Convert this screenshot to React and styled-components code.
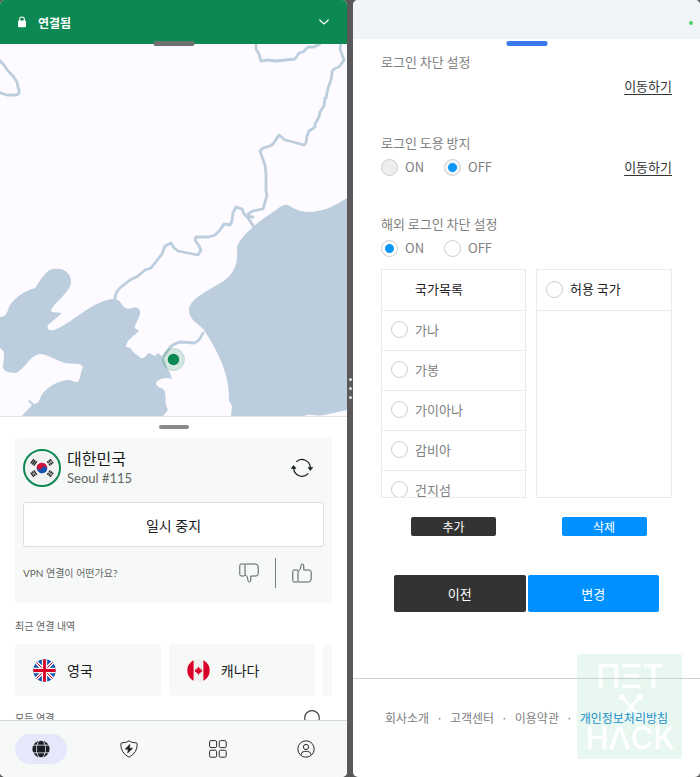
import React, { useState } from 'react';
import styled, { createGlobalStyle, css } from 'styled-components';

const countries = ['가나', '가봉', '가이아나', '감비아', '건지섬'];

const footerLinks = ['회사소개', '고객센터', '이용약관', '개인정보처리방침'];

const App = () => (
  <>
    <GlobalStyle />
    <Screen>
      <VpnPanel />
      <Divider>
        <DividerDot />
        <DividerDot />
        <DividerDot />
      </Divider>
      <SettingsPanel />
    </Screen>
  </>
);

const VpnPanel = () => {
  const [tab, setTab] = useState('map');

  const tabs = [
    { id: 'map', label: '지도', icon: <GlobeIcon /> },
    { id: 'protect', label: '보호', icon: <ShieldIcon /> },
    { id: 'apps', label: '앱', icon: <GridIcon /> },
    { id: 'profile', label: '프로필', icon: <UserIcon /> },
  ];

  return (
    <Vpn>
      <StatusBar>
        <LockIcon />
        <StatusText>연결됨</StatusText>
        <IconButton aria-label='펼치기'>
          <ChevronIcon />
        </IconButton>
        <WindowHandle $color='#6d706e' />
      </StatusBar>
      <MapArea>
        <WorldMap />
      </MapArea>
      <Sheet>
        <SheetGrip />
        <ServerCard>
          <ServerRow>
            <FlagRing>
              <KoreaFlag />
            </FlagRing>
            <ServerText>
              <Country>대한민국</Country>
              <City>Seoul #115</City>
            </ServerText>
            <IconButton aria-label='새로고침'>
              <RefreshIcon />
            </IconButton>
          </ServerRow>
          <PauseButton>일시 중지</PauseButton>
          <FeedbackRow>
            <Caption>VPN 연결이 어떤가요?</Caption>
            <FeedbackButtons>
              <IconButton aria-label='싫어요'>
                <ThumbIcon $down />
              </IconButton>
              <Separator />
              <IconButton aria-label='좋아요'>
                <ThumbIcon />
              </IconButton>
            </FeedbackButtons>
          </FeedbackRow>
        </ServerCard>
        <RecentTitle>최근 연결 내역</RecentTitle>
        <RecentList>
          <RecentItem>
            <BritainFlag />
            영국
          </RecentItem>
          <RecentItem>
            <CanadaFlag />
            캐나다
          </RecentItem>
          <RecentItem aria-label='더 보기' />
        </RecentList>
        <AllRow>
          <Caption>모든 연결</Caption>
          <IconButton aria-label='검색'>
            <SearchIcon />
          </IconButton>
        </AllRow>
      </Sheet>
      <TabBar>
        {tabs.map((item) => (
          <TabButton
            key={item.id}
            aria-label={item.label}
            $active={tab === item.id}
            onClick={() => setTab(item.id)}
          >
            {item.icon}
          </TabButton>
        ))}
      </TabBar>
    </Vpn>
  );
};

const SettingsPanel = () => (
  <Settings>
    <TopBar>
      <CameraDot />
    </TopBar>
    <WindowHandle $color='#3a78ee' />
    <SettingsBody>
      <Section>
        <SectionTitle>로그인 차단 설정</SectionTitle>
        <SectionRow>
          <MoveLink href='#block'>이동하기</MoveLink>
        </SectionRow>
      </Section>
      <Section>
        <SectionTitle>로그인 도용 방지</SectionTitle>
        <SectionRow>
          <OnOff name='theft' value='off' disabled />
          <MoveLink href='#theft'>이동하기</MoveLink>
        </SectionRow>
      </Section>
      <Section>
        <SectionTitle>해외 로그인 차단 설정</SectionTitle>
        <SectionRow>
          <OnOff name='abroad' value='on' />
        </SectionRow>
      </Section>
      <Pickers>
        <Picker $grow={145}>
          <PickerBox>
            <PickerHead $indent>국가목록</PickerHead>
            {countries.map((country) => (
              <PickerRow key={country}>
                <Radio type='radio' name='country' />
                {country}
              </PickerRow>
            ))}
          </PickerBox>
          <SmallButton>추가</SmallButton>
        </Picker>
        <Picker $grow={136}>
          <PickerBox>
            <PickerHead>
              <Radio type='radio' name='allowed' />
              허용 국가
            </PickerHead>
          </PickerBox>
          <SmallButton $primary>삭제</SmallButton>
        </Picker>
      </Pickers>
      <Actions>
        <ActionButton>이전</ActionButton>
        <ActionButton $primary>변경</ActionButton>
      </Actions>
    </SettingsBody>
    <Watermark />
    <Footer>
      {footerLinks.map((label, index) => (
        <React.Fragment key={label}>
          {index > 0 && <span>·</span>}
          <FooterLink href='#footer' $accent={index === 3}>
            {label}
          </FooterLink>
        </React.Fragment>
      ))}
    </Footer>
  </Settings>
);

const OnOff = ({ name, value, disabled }) => (
  <Options>
    {['on', 'off'].map((option) => (
      <Option key={option}>
        <Radio
          type='radio'
          name={name}
          defaultChecked={option === value}
          disabled={disabled}
        />
        {option.toUpperCase()}
      </Option>
    ))}
  </Options>
);

const WorldMap = () => (
  <MapSvg viewBox='0 44 347 372' preserveAspectRatio='xMidYMid slice'>
    {/* East sea */}
    <path
      fill='#bccddd'
      d='M347 198C333 207 321 212 309 212C299 212 293 208 290 206C285 203 281 206 276 210C270 214 262 219 254 226C244 235 236 243 237 251C238 264 234 273 225 280C212 289 189 298 189 310C189 320 198 323 204 330C219 353 230 376 229 401L232 406L231 416H304C312 413 316 417 324 415L347 410Z'
    />
    {/* Yellow sea */}
    <path
      fill='#bccddd'
      d='M0 317C6 317 7 313 9 307C14 297 25 291 35 288C40 281 46 269 54 269C66 267 72 276 71 283C69 294 53 303 51 311L52 312L62 313L48 325C46 329 50 331 54 330C70 325 95 298 115 299C122 300 121 308 129 309C135 306 141 307 140 314C138 321 134 326 135 328L139 331C133 337 126 340 126 347L131 348C132 353 137 354 141 358C146 359 145 355 149 353L155 356L158 353L164 358C166 368 171 373 172 379C165 376 156 380 156 384C158 389 164 387 165 392C166 402 165 405 168 410L163 416H22L32 405L28 401L30 400L34 404C38 404 40 400 41 396C46 388 55 382 67 380C72 380 75 383 78 382C81 377 80 373 83 367C80 362 75 365 65 363C55 360 47 354 40 354C30 355 25 369 16 373C5 373 2 369 3 365C5 355 4 350 0 348Z'
    />
    <g
      fill='none'
      stroke='#bccddd'
      strokeWidth='2.8'
      strokeLinejoin='round'
      strokeLinecap='round'
    >
      <path d='M-2 59L4 65L8 71L13 76L17 82L18 87L19 90Q20 94 16 95H7L-2 92' />
      <path d='M256 42V49L259 54L261 61L268 60L276 61L295 59L299 53L303 52L308 47L314 47L320 44' />
      <path d='M341 42L340 49L344 60L339 67Q331 69 332 74L331 80L328 88L326 98H325L324 106L320 112L319 117L315 124V127L309 131L307 136L306 143L304 145L293 142L285 140L279 135L273 144L270 146L263 148L260 151L265 165L266 173V191L267 195L263 209L253 211L248 214L250 217H253' />
      <path d='M254 227L248 218L244 214L242 209L236 207L233 213L232 221L230 225L224 224L220 230L215 235L209 237H196L195 240L199 246L201 250L198 255L188 253L178 251L174 248L171 243L165 246L162 254L151 268L145 270L138 276L130 280L121 287Q115 292 115 299' />
      <path d='M164 356L168 350Q173 343 181 342L194 343Q199 342 203 333' />
    </g>
    <circle cx='173.5' cy='359.5' r='11' fill='#0c8852' fillOpacity='.17' stroke='#0c8852' strokeOpacity='.2' />
    <circle cx='173.5' cy='359.5' r='5.7' fill='#0c8852' />
  </MapSvg>
);

const LockIcon = () => (
  <svg width='10' height='12' viewBox='0 0 10 12'>
    <path d='M2.6 5V3.4a2.4 2.4 0 0 1 4.8 0V5' fill='none' stroke='#fff' strokeWidth='1.1' />
    <rect x='1' y='4.6' width='8' height='6.6' rx='1.2' fill='#fff' />
  </svg>
);

const ChevronIcon = () => (
  <svg width='12' height='8' viewBox='0 0 12 8'>
    <path d='M1.4 1.8L6 6L10.6 1.8' fill='none' stroke='#fff' strokeWidth='1.2' />
  </svg>
);

const RefreshIcon = () => (
  <svg width='22' height='20' viewBox='0 0 22 20'>
    <g fill='none' stroke='#1a1c1c' strokeWidth='1.2'>
      <path d='M5.2 3.9A8.3 8.3 0 0 1 19.3 10' />
      <path d='M2.7 10A8.3 8.3 0 0 0 17.3 15.4' />
    </g>
    <path d='M17 9.4H21.8L19.4 12.4ZM.2 10.6H5L2.6 7.4Z' fill='#1a1c1c' stroke='#1a1c1c' strokeLinejoin='round' strokeWidth='.6' />
  </svg>
);

const ThumbIcon = ({ $down }) => (
  <svg width='20' height='20' viewBox='0 0 20 20'>
    <g
      fill='none'
      stroke='#555a59'
      strokeLinejoin='round'
      transform={$down ? 'matrix(1 0 0 -1 0 20)' : undefined}
    >
      <path d='M2.2 7H4.8Q6 7 6 8.2V17.8Q6 19 4.8 19H2.2Q.8 19 .8 17.6V8.4Q.8 7 2.2 7Z' />
      <path d='M6 8.4Q8.8 7 8.9 3.6V2.4Q9 1 10.3 1Q11.8 1 11.8 3V7H17Q19.2 7 19.2 9.2V16Q19.2 19 16.4 19H6' />
    </g>
  </svg>
);

const SearchIcon = () => (
  <svg width='20' height='20' viewBox='0 0 20 20'>
    <circle cx='10' cy='7.9' r='7.3' fill='none' stroke='#3a3d3d' strokeWidth='1.1' />
    <path d='M15 14L19 18.5' stroke='#3a3d3d' strokeWidth='1.1' />
  </svg>
);

const GlobeIcon = () => (
  <svg width='18' height='18' viewBox='0 0 18 18'>
    <circle cx='9' cy='9' r='8.6' fill='#1b1d20' />
    <g fill='none' stroke='#e4e8fa' strokeWidth='.9'>
      <ellipse cx='9' cy='9' rx='4.4' ry='9' />
      <path d='M0 5.2H18M0 12.8H18' />
    </g>
    <rect x='5.2' y='5.8' width='7.6' height='6.4' fill='#1b1d20' />
  </svg>
);

const ShieldIcon = () => (
  <svg width='18' height='18' viewBox='0 0 18 18'>
    <path
      d='M9 .8Q10.4 2.6 16.6 3Q17.2 3 17.2 3.8Q17.4 13 9 17.2Q.6 13 .8 3.8Q.8 3 1.4 3Q7.6 2.6 9 .8Z'
      fill='none'
      stroke='#2b2d2e'
      strokeLinejoin='round'
    />
    <path d='M9.8 4.2L5.2 9.2H8.2L7.6 13L12.8 8.2H9.6Z' fill='#1b1d20' stroke='#1b1d20' strokeWidth='.5' />
  </svg>
);

const GridIcon = () => (
  <svg width='18' height='18' viewBox='0 0 18 18' fill='none' stroke='#2b2d2e'>
    <rect x='.6' y='.6' width='7' height='7' rx='1.4' />
    <rect x='10.2' y='.6' width='7' height='7' rx='1.4' />
    <rect x='.6' y='10.2' width='7' height='7' rx='1.4' />
    <rect x='10.2' y='10.2' width='7' height='7' rx='1.4' />
  </svg>
);

const UserIcon = () => (
  <svg width='18' height='18' viewBox='0 0 18 18' fill='none' stroke='#2b2d2e'>
    <circle cx='9' cy='9' r='8.2' />
    <circle cx='9' cy='7' r='2.6' />
    <path d='M4 14.8Q4.4 11.4 7.4 11.4H10.6Q13.6 11.4 14 14.8' />
  </svg>
);

const KoreaFlag = () => (
  <svg width='32' height='32' viewBox='-16.5 -16.5 33 33'>
    <circle r='16.5' fill='#f2f2f3' />
    <g transform='rotate(25)'>
      <path d='M-5.5 0A5.5 5.5 0 0 1 5.5 0Z' fill='#d0103a' />
      <path d='M-5.5 0A5.5 5.5 0 0 0 5.5 0Z' fill='#1252b0' />
      <circle cx='-2.75' r='2.75' fill='#d0103a' />
      <circle cx='2.75' r='2.75' fill='#1252b0' />
    </g>
    <g stroke='#222' strokeWidth='1.4'>
      <path transform='translate(-8.5 -5.8) rotate(-54)' d='M-2.7-1.9H2.7M-2.7 0H2.7M-2.7 1.9H2.7' />
      <path transform='translate(8.5 5.8) rotate(-54)' d='M-2.7-1.9H2.7M-2.7 0H2.7M-2.7 1.9H2.7' strokeDasharray='2.4 .6' />
      <path transform='translate(8.5 -5.8) rotate(54)' d='M-2.7-1.9H2.7M-2.7 0H2.7M-2.7 1.9H2.7' strokeDasharray='2.4 .6' />
      <path transform='translate(-8.5 5.8) rotate(54)' d='M-2.7-1.9H2.7M-2.7 1.9H2.7M-2.7 0H-.4M.4 0H2.7' />
    </g>
  </svg>
);

const BritainFlag = () => (
  <svg width='23' height='23' viewBox='0 0 23 23'>
    <clipPath id='gb'>
      <circle cx='11.5' cy='11.5' r='11.2' />
    </clipPath>
    <g clipPath='url(#gb)'>
      <rect width='23' height='23' fill='#1252b0' />
      <path d='M0 0L23 23M23 0L0 23' stroke='#f0f0f0' strokeWidth='3.6' />
      <path d='M0 0L23 23M23 0L0 23' stroke='#d80027' strokeWidth='1' />
      <path d='M11.5 0V23M0 11.5H23' stroke='#f0f0f0' strokeWidth='5.4' />
      <path d='M11.5 0V23M0 11.5H23' stroke='#d80027' strokeWidth='2.8' />
    </g>
  </svg>
);

const CanadaFlag = () => (
  <svg width='23' height='23' viewBox='0 0 23 23'>
    <clipPath id='ca'>
      <circle cx='11.5' cy='11.5' r='11.2' />
    </clipPath>
    <g clipPath='url(#ca)'>
      <rect width='23' height='23' fill='#f0f0f0' />
      <path d='M0 0H6.6V23H0ZM16.4 0H23V23H16.4Z' fill='#d80027' />
    </g>
    <path
      d='M11.5 7.6L12.6 9.4L13.6 9L13.3 11L15 10.2L14.8 11.4L15.6 12L13.2 13.8L13.4 14.6L11.9 14.3V16H11.1V14.3L9.6 14.6L9.8 13.8L7.4 12L8.2 11.4L8 10.2L9.7 11L9.4 9L10.4 9.4Z'
      fill='#d80027'
    />
  </svg>
);

const Watermark = () => (
  <WatermarkSvg viewBox='0 0 105 105'>
    <rect width='105' height='105' rx='2' fill='#e9f7f1' />
    <g fill='#fff' fontWeight='500' textAnchor='middle'>
      <text x='53' y='34' fontSize='33'>
        ΠΞT
      </text>
      <text x='53' y='95' fontSize='31'>
        HΛCK
      </text>
    </g>
    <g stroke='#fff' strokeWidth='3' strokeLinecap='round' fill='#fff'>
      <path d='M45 43L62 62M63 43L46 62' />
      <circle cx='45' cy='43' r='1.6' />
      <circle cx='63' cy='43' r='1.6' />
    </g>
  </WatermarkSvg>
);

const GlobalStyle = createGlobalStyle`
  * {
    box-sizing: border-box;
  }
  body {
    margin: 0;
    background: #5a585a;
    font-family: Lato, 'Noto Sans CJK KR', sans-serif;
  }
  button {
    font: inherit;
    border: 0;
    padding: 0;
    background: none;
    cursor: pointer;
  }
  svg {
    display: block;
    flex: none;
  }
`;

const Screen = styled.main`
  display: grid;
  grid-template-columns: 1fr 6px 1fr;
  height: 100vh;
`;

const Divider = styled.div`
  display: flex;
  flex-direction: column;
  align-items: center;
  justify-content: center;
  gap: 6px;
`;

const DividerDot = styled.span`
  width: 3px;
  height: 3px;
  border-radius: 50%;
  background: #dedede;
`;

const Vpn = styled.section`
  position: relative;
  display: flex;
  flex-direction: column;
  min-width: 0;
  overflow: hidden;
  border-radius: 5px;
  background: #fff;
`;

const StatusBar = styled.header`
  position: relative;
  z-index: 1;
  display: flex;
  align-items: center;
  height: 44px;
  padding: 0 17px;
  background: #0c8852;
`;

const StatusText = styled.strong`
  flex: 1;
  margin-left: 11px;
  color: #fff;
  font-size: 12px;
`;

const IconButton = styled.button`
  display: flex;
`;

const WindowHandle = styled.span`
  position: absolute;
  top: 41px;
  left: 50%;
  z-index: 2;
  width: 41px;
  height: 5px;
  border-radius: 2px;
  transform: translateX(-50%);
  background: ${({ $color }) => $color};
`;

const MapArea = styled.div`
  flex: 1;
  min-height: 0;
  background: #fdfbff;
`;

const MapSvg = styled.svg`
  width: 100%;
  height: 100%;
`;

const Sheet = styled.div`
  flex: 0 0 304px;
  overflow: hidden;
  padding: 8px 15px 0;
  border-top: 1px solid #e3e3e6;
  background: #fff;
`;

const SheetGrip = styled.div`
  width: 30px;
  height: 4px;
  margin: 0 auto 9px;
  border-radius: 2px;
  background: #888b8a;
`;

const ServerCard = styled.div`
  height: 165px;
  padding: 11px 8px;
  border-radius: 3px;
  background: #f7f9f8;
`;

const ServerRow = styled.div`
  display: flex;
  align-items: center;
  padding-right: 11px;
`;

const FlagRing = styled.div`
  padding: 1px;
  border: 2px solid #0c8852;
  border-radius: 50%;
`;

const ServerText = styled.div`
  flex: 1;
  margin-left: 6px;
`;

const Country = styled.div`
  color: #1a1c1c;
  font-size: 16px;
  line-height: 20px;
`;

const City = styled.div`
  color: #5f6463;
  font-size: 13px;
  line-height: 18px;
`;

const PauseButton = styled.button`
  width: 100%;
  height: 45px;
  margin-top: 15px;
  border: 1px solid #dcdfde;
  border-radius: 3px;
  background: #fff;
  color: #1a1c1c;
  font-size: 14px;
`;

const FeedbackRow = styled.div`
  display: flex;
  align-items: center;
  justify-content: space-between;
  margin-top: 11px;
  padding-right: 12px;
`;

const FeedbackButtons = styled.div`
  display: flex;
  align-items: center;
  gap: 16px;
`;

const Separator = styled.span`
  width: 1px;
  height: 30px;
  background: #7c807f;
`;

const Caption = styled.span`
  color: #5f6463;
  font-size: 10px;
  line-height: 16px;
`;

const RecentTitle = styled(Caption)`
  display: block;
  margin: 15px 0 10px;
`;

const RecentList = styled.div`
  display: flex;
  gap: 8px;
  overflow: hidden;
`;

const RecentItem = styled.button`
  display: flex;
  flex: 0 0 46%;
  align-items: center;
  gap: 11px;
  height: 52px;
  padding-left: 18px;
  border-radius: 3px;
  background: #f7f9f8;
  color: #1a1c1c;
  font-size: 14px;
`;

const AllRow = styled.div`
  display: flex;
  align-items: flex-start;
  justify-content: space-between;
  padding: 14px 10px 0 0;
`;

const TabBar = styled.nav`
  display: flex;
  justify-content: space-between;
  padding: 13px 15px;
  border-top: 1px solid #d6dada;
  background: #f7f9f8;
`;

const TabButton = styled.button`
  display: flex;
  align-items: center;
  justify-content: center;
  width: 52px;
  height: 30px;
  border-radius: 15px;
  background: ${({ $active }) => ($active ? '#e4e8fa' : 'transparent')};
`;

const Settings = styled.section`
  position: relative;
  min-width: 0;
  overflow: hidden;
  border-radius: 5px;
  background: #fff;
  color: #808080;
  font-family: 'Noto Sans CJK KR', sans-serif;
  font-size: 13px;
  line-height: 20px;
`;

const TopBar = styled.header`
  display: flex;
  align-items: center;
  justify-content: flex-end;
  height: 39px;
  padding: 7px 7px 0 0;
  background: #f0f4f8;
`;

const CameraDot = styled.span`
  width: 4px;
  height: 4px;
  border-radius: 50%;
  background: #4cd05f;
`;

const SettingsBody = styled.div`
  padding: 13px 28px 0;
`;

const Section = styled.section`
  margin-bottom: 37px;

  &:nth-of-type(3) {
    margin-bottom: 11px;
  }
`;

const SectionTitle = styled.h2`
  margin: 0 0 4px;
  font-size: 13px;
  font-weight: 400;
  line-height: 20px;
`;

const SectionRow = styled.div`
  display: flex;
  align-items: center;
  height: 20px;
`;

const MoveLink = styled.a`
  margin-left: auto;
  color: #333;
  text-underline-offset: 3px;
`;

const Options = styled.div`
  display: flex;
  gap: 20px;
`;

const Option = styled.label`
  display: flex;
  align-items: center;
  gap: 7px;
`;

const Radio = styled.input`
  flex: none;
  width: 17px;
  height: 17px;
  margin: 0;
  border: 1px solid #ccc;
  border-radius: 50%;
  appearance: none;
  background: #fff;

  &:disabled {
    background: #eee;
  }
  &:checked {
    background: radial-gradient(circle, #0a97f5 4px, #fff 5px);
  }
  &:checked:disabled {
    background: radial-gradient(circle, #0a97f5 4px, #f0f4f7 5px);
  }
`;

const Pickers = styled.div`
  display: flex;
  gap: 10px;
`;

const Picker = styled.div`
  display: flex;
  flex: ${({ $grow }) => $grow} 1 0;
  flex-direction: column;
  align-items: center;
`;

const PickerBox = styled.div`
  width: 100%;
  height: 229px;
  overflow: hidden;
  border: 1px solid #ebebeb;
`;

const PickerRow = styled.label`
  display: flex;
  align-items: center;
  gap: 7px;
  height: 40px;
  padding: 0 9px 2px;
  border-bottom: 1px solid #ebebeb;
`;

const PickerHead = styled(PickerRow)`
  height: 41px;
  color: #222;
  ${({ $indent }) =>
    $indent &&
    css`
      padding-left: 33px;
    `}
`;

const SmallButton = styled.button`
  width: 85px;
  height: 19px;
  margin-top: 19px;
  border-radius: 2px;
  background: ${({ $primary }) => ($primary ? '#0090ff' : '#333')};
  color: #fff;
  font-size: 12px;
  line-height: 19px;
`;

const Actions = styled.div`
  display: flex;
  gap: 2px;
  margin: 39px 13px 66px;
`;

const ActionButton = styled.button`
  flex: 1;
  height: 37px;
  border-radius: 2px;
  background: ${({ $primary }) => ($primary ? '#0090ff' : '#333')};
  color: #fff;
  font-size: 13px;
`;

const WatermarkSvg = styled.svg`
  position: absolute;
  right: 18px;
  bottom: 18px;
  width: 105px;
  height: 105px;
  font-family: Inter, sans-serif;
`;

const Footer = styled.footer`
  position: relative;
  display: flex;
  justify-content: center;
  gap: 7px;
  padding: 29px 0 49px;
  border-top: 1px solid #ccd0ce;
  font-size: 12px;
`;

const FooterLink = styled.a`
  color: ${({ $accent }) => ($accent ? '#2090c8' : '#808080')};
  text-decoration: none;
`;

export default App;
